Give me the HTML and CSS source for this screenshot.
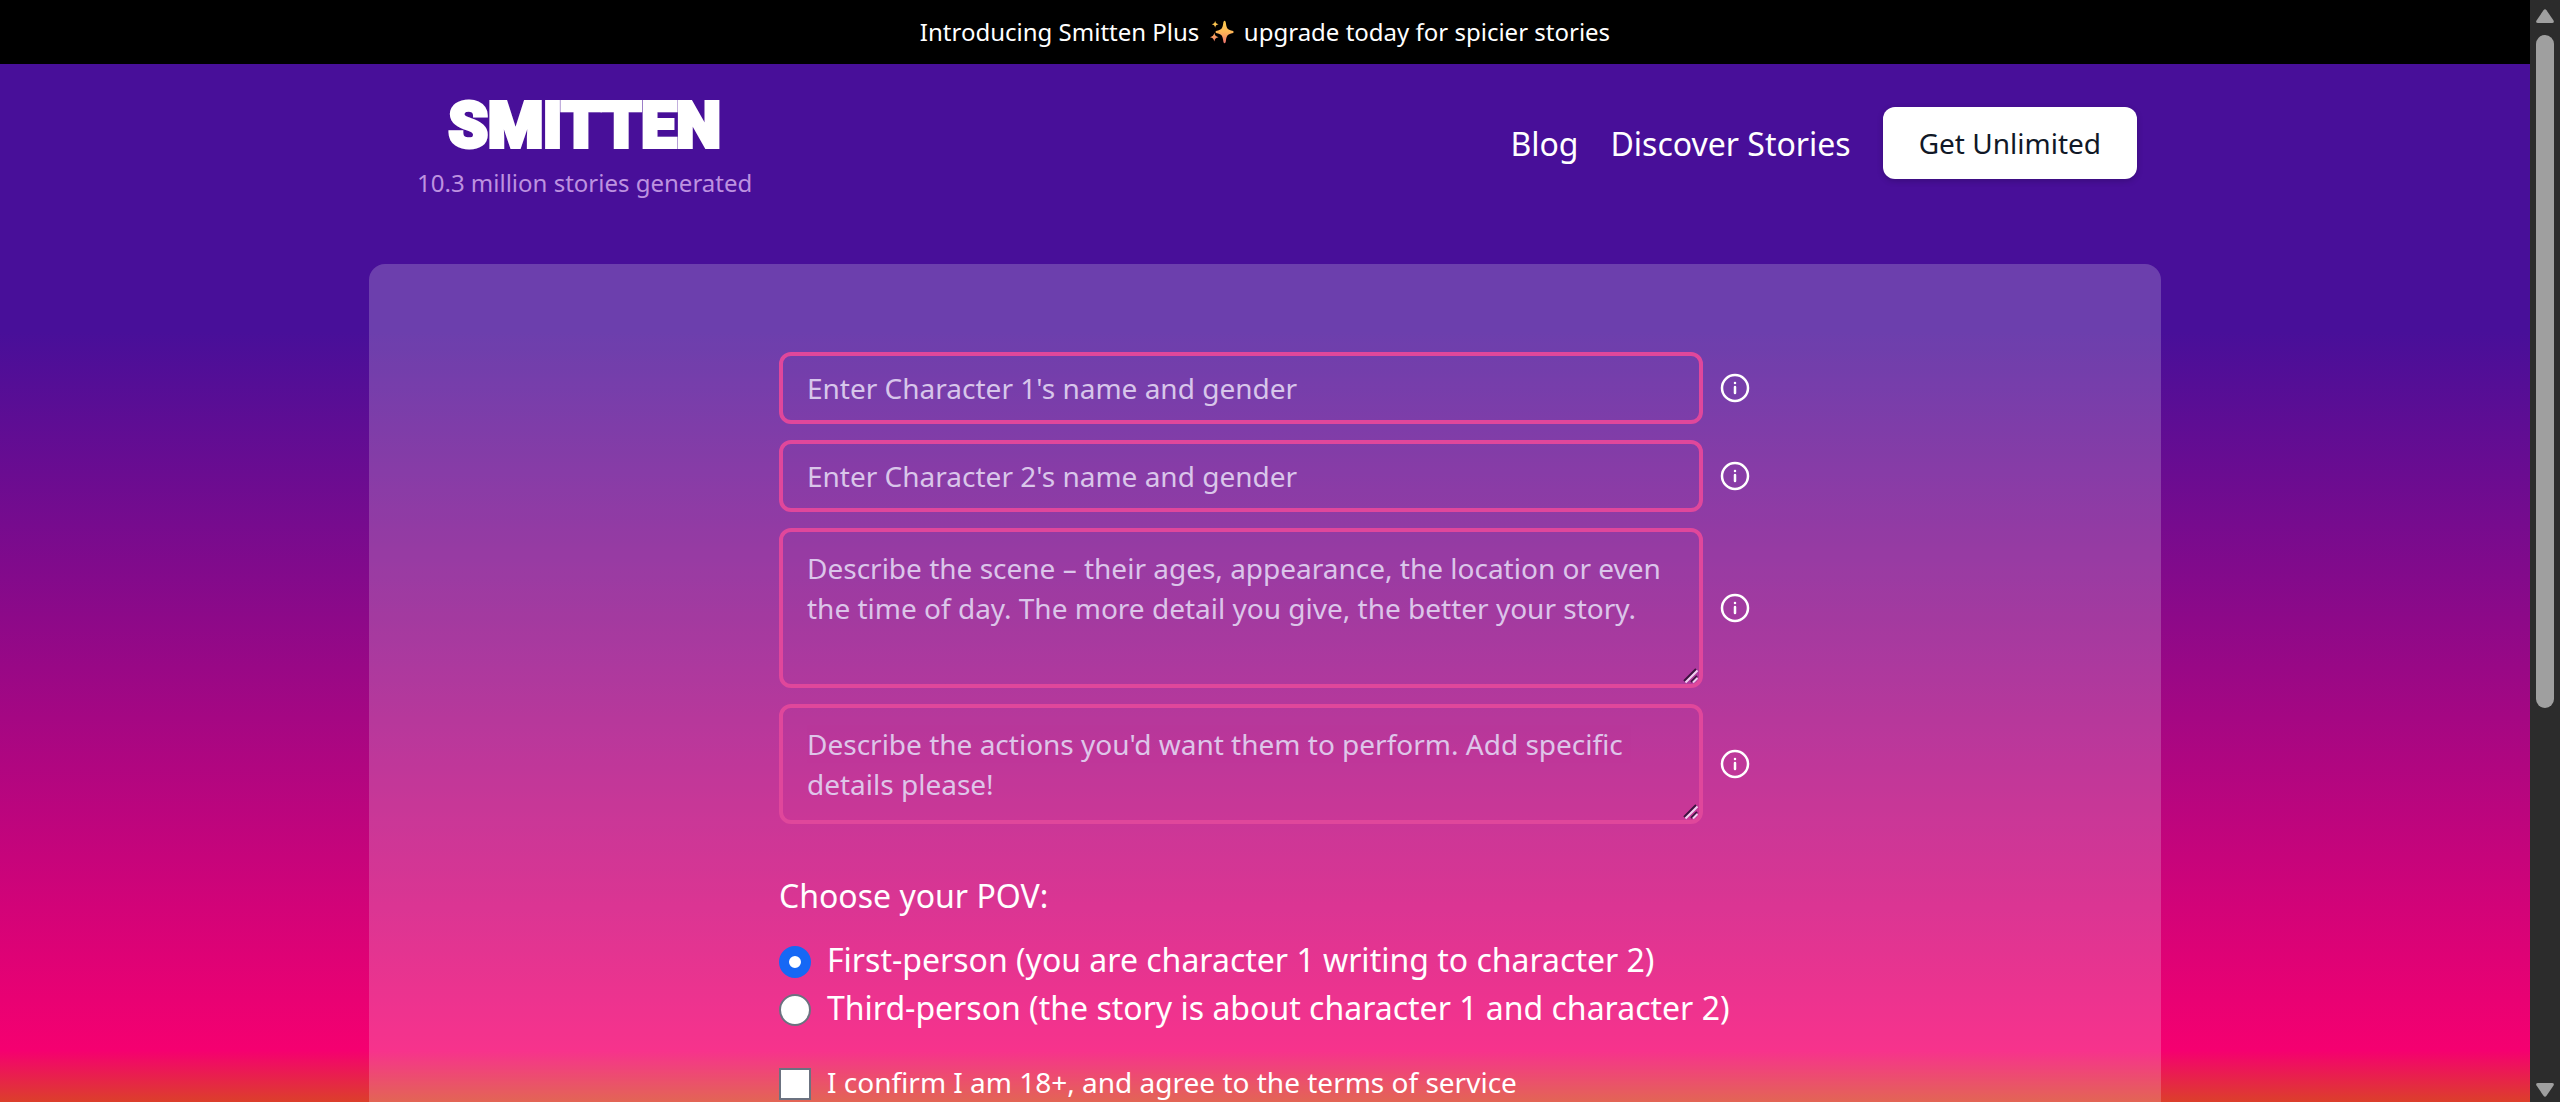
FILE: index.html
```html
<!DOCTYPE html>
<html lang="en">
  <head>
    <meta charset="UTF-8" />
    <meta name="viewport" content="width=device-width, initial-scale=1" />
    <title>Smitten</title>
    <link rel="stylesheet" href="styles.css">
  </head>
  <body>
    <div class="page">
      <div class="banner">
        <a href="#plus">Introducing Smitten Plus
          <svg class="sparkles" viewBox="0 0 28 28" aria-hidden="true">
            <defs>
              <linearGradient id="spark" x1="0" y1="0" x2="0" y2="28" gradientUnits="userSpaceOnUse">
                <stop offset="0.1" stop-color="#fdc94f" />
                <stop offset="0.5" stop-color="#fdb656" />
                <stop offset="1" stop-color="#ee6f72" />
              </linearGradient>
            </defs>
            <path fill="url(#spark)" d="M17 1c1 0 1.300 1 1.600 3 .7 5 1.600 7 6 8.200 2 .5 3 .8 3 1.800s-1 1.300-3 1.800c-4.400 1.200-5.300 3.200-6 8.200-.3 2-.6 3-1.600 3s-1.300-1-1.600-3c-.7-5-1.600-7-6-8.200-2-.5-3-.8-3-1.800s1-1.300 3-1.800c4.400-1.200 5.300-3.200 6-8.200.3-2 .6-3 1.600-3z" />
            <path fill="url(#spark)" d="M6 1c.6 2.700 1.300 3.400 4 4-2.700.6-3.400 1.300-4 4-.6-2.700-1.300-3.400-4-4 2.700-.6 3.400-1.300 4-4zM5 15c.7 3.300 1.700 4.300 5 5-3.300.7-4.300 1.700-5 5-.7-3.300-1.700-4.300-5-5 3.300-.7 4.300-1.700 5-5z" />
          </svg>
          upgrade today for spicier stories</a>
      </div>

      <header class="header">
        <div class="brand">
          <a class="logo" href="#home">SMITTEN</a>
          <p class="counter">10.3 million stories generated</p>
        </div>
        <nav class="nav">
          <a href="#blog">Blog</a>
          <a href="#discover">Discover Stories</a>
          <button type="button" class="btn-unlimited">Get Unlimited</button>
        </nav>
      </header>

      <main class="card">
        <form class="story-form">
          <div class="field">
            <input type="text" name="character1" aria-label="Character 1" placeholder="Enter Character 1's name and gender" />
            <button type="button" class="info" aria-label="About character 1">
              <svg viewBox="0 0 32 32" aria-hidden="true"><circle cx="16" cy="16" r="13" /><path d="M16 15v6M16 11v.1" /></svg>
            </button>
          </div>
          <div class="field">
            <input type="text" name="character2" aria-label="Character 2" placeholder="Enter Character 2's name and gender" />
            <button type="button" class="info" aria-label="About character 2">
              <svg viewBox="0 0 32 32" aria-hidden="true"><circle cx="16" cy="16" r="13" /><path d="M16 15v6M16 11v.1" /></svg>
            </button>
          </div>
          <div class="field">
            <div class="area">
              <textarea name="scene" rows="3" aria-label="Scene" placeholder="Describe the scene – their ages, appearance, the location or even the time of day. The more detail you give, the better your story."></textarea>
              <svg class="grip" viewBox="0 0 16 16" aria-hidden="true"><path class="dark" d="M1 13L13 1M8 14l6-6" /><path class="light" d="M2.500 14.500L14.500 2.500M10 14.500l4.500-4.500" /></svg>
            </div>
            <button type="button" class="info" aria-label="About the scene">
              <svg viewBox="0 0 32 32" aria-hidden="true"><circle cx="16" cy="16" r="13" /><path d="M16 15v6M16 11v.1" /></svg>
            </button>
          </div>
          <div class="field">
            <div class="area">
              <textarea name="actions" rows="2" aria-label="Actions" placeholder="Describe the actions you'd want them to perform. Add specific details please!"></textarea>
              <svg class="grip" viewBox="0 0 16 16" aria-hidden="true"><path class="dark" d="M1 13L13 1M8 14l6-6" /><path class="light" d="M2.500 14.500L14.500 2.500M10 14.500l4.500-4.500" /></svg>
            </div>
            <button type="button" class="info" aria-label="About the actions">
              <svg viewBox="0 0 32 32" aria-hidden="true"><circle cx="16" cy="16" r="13" /><path d="M16 15v6M16 11v.1" /></svg>
            </button>
          </div>

          <fieldset class="pov">
            <legend>Choose your POV:</legend>
            <label class="choice">
              <input type="radio" name="pov" value="first" checked />
              <span>First-person (you are character 1 writing to character 2)</span>
            </label>
            <label class="choice">
              <input type="radio" name="pov" value="third" />
              <span>Third-person (the story is about character 1 and character 2)</span>
            </label>
          </fieldset>

          <label class="choice terms">
            <input type="checkbox" name="terms" />
            <span>I confirm I am 18+, and agree to the terms of service</span>
          </label>
        </form>
      </main>
    </div>

    <div class="scrollbar" aria-hidden="true">
      <svg class="arrow" viewBox="0 0 18 14"><path d="M7.500 1.200q1.500-1.700 3 0l7 10.300q1.200 2.500-1.500 2.500H2q-2.700 0-1.500-2.500z" /></svg>
      <div class="track"><div class="thumb"></div></div>
      <svg class="arrow" viewBox="0 0 18 14"><path d="M7.500 12.800q1.500 1.700 3 0l7-10.300Q18.700 0 16 0H2Q-.7 0 .5 2.500z" /></svg>
    </div>
  </body>
</html>
```
FILE: styles.css
```css
* {
  box-sizing: border-box;
}
body {
  margin: 0;
  display: flex;
  min-height: 100vh;
  font-family: "Noto Sans", sans-serif;
  font-size: 28px;
  color: #fff;
}
a {
  color: inherit;
  text-decoration: none;
}
.page {
  flex: 1;
  display: flex;
  flex-direction: column;
  background: linear-gradient(#480f99 30%, #f50070 95%, #da4425 100%);
}

/* top banner */
.banner {
  background: #000;
  text-align: center;
  font-size: 24px;
  line-height: 64px;
}
.sparkles {
  width: 24px;
  height: 24px;
  margin: 0 4px;
  vertical-align: -3px;
}

/* header */
.header {
  width: 100%;
  max-width: 1792px;
  margin: 0 auto;
  padding: 18px 24px 60px 48px;
  display: flex;
  justify-content: space-between;
  align-items: center;
}
.brand {
  padding-top: 8px;
  text-align: center;
}
.logo {
  display: block;
  font-family: Roboto, sans-serif;
  font-size: 63px;
  font-weight: 900;
  line-height: 72px;
  -webkit-text-stroke: 4px #fff;
}
.counter {
  margin: 0;
  font-size: 24px;
  line-height: 42px;
  color: #bd92e0;
}
.nav {
  display: flex;
  align-items: center;
  gap: 32px;
  font-size: 32px;
}
.btn-unlimited {
  height: 72px;
  padding: 0 36px;
  border: none;
  border-radius: 12px;
  background: #fff;
  color: #111827;
  font-family: inherit;
  font-size: 28px;
  cursor: pointer;
  box-shadow: 0 2px 6px rgba(0, 0, 0, 0.2);
}

/* form */
.card {
  flex: 1;
  width: 100%;
  max-width: 1792px;
  margin: 0 auto;
  padding: 88px 24px 0;
  border-radius: 16px 16px 0 0;
  background: rgba(255, 255, 255, 0.2);
}
.story-form {
  max-width: 972px;
  margin: 0 auto;
}
.field {
  display: flex;
  align-items: center;
  gap: 16px;
  margin-bottom: 16px;
}
.field input,
.field textarea {
  flex: 1;
  width: 100%;
  min-width: 0;
  display: block;
  padding: 16px 24px;
  border: 4px solid #e0479b;
  border-radius: 12px;
  background: transparent;
  color: #fff;
  font-family: inherit;
  font-size: 28px;
  line-height: 40px;
}
.field input {
  height: 72px;
  padding: 0 24px;
}
.field textarea {
  resize: none;
}
.field ::placeholder {
  color: #e2d5f2;
  opacity: 0.9;
}
.area {
  flex: 1;
  position: relative;
}
.grip {
  position: absolute;
  right: 4px;
  bottom: 4px;
  width: 16px;
  height: 16px;
  fill: none;
  stroke-width: 2;
  pointer-events: none;
}
.grip .dark {
  stroke: #3c1440;
}
.grip .light {
  stroke: #eed0ee;
}
.info {
  display: flex;
  padding: 0;
  border: none;
  background: none;
  cursor: pointer;
}
.info svg {
  width: 32px;
  height: 32px;
  fill: none;
  stroke: #fff;
  stroke-width: 2.5;
  stroke-linecap: round;
}
.pov {
  margin: 48px 0 0;
  padding: 0;
  border: none;
}
.pov legend {
  padding: 0;
  margin-bottom: 16px;
  font-size: 32px;
  line-height: 48px;
}
.choice {
  display: flex;
  align-items: center;
  gap: 16px;
  font-size: 32px;
  line-height: 48px;
}
.choice input {
  appearance: none;
  flex: none;
  width: 32px;
  height: 32px;
  margin: 4px 0 0;
  border: 2px solid #6b7280;
  background: #fff;
}
.choice input[type="radio"] {
  border-radius: 50%;
}
.choice input[type="radio"]:checked {
  border: 10px solid #1668f5;
}
.choice input[type="checkbox"]:checked {
  background: #1668f5;
}
.terms {
  margin-top: 26px;
  font-size: 28px;
}

/* page scrollbar */
.scrollbar {
  width: 30px;
  padding: 9px 0;
  display: flex;
  flex-direction: column;
  align-items: center;
  gap: 12px;
  background: #2c2c2c;
}
.arrow {
  width: 18px;
  height: 14px;
  fill: #9f9f9f;
}
.track {
  flex: 1;
}
.thumb {
  width: 18px;
  height: 65%;
  border-radius: 9px;
  background: #9f9f9f;
}
```
